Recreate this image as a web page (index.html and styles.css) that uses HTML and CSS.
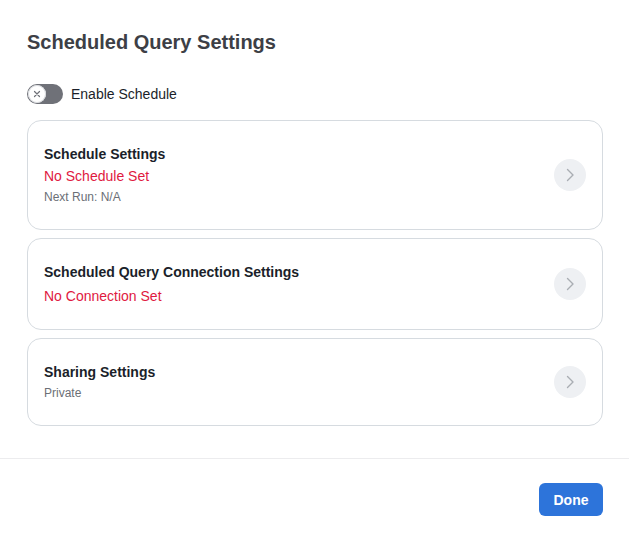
FILE: index.html
```html
<!DOCTYPE html>
<html>
<head>
<meta charset="utf-8">
<link rel="stylesheet" href="styles.css">
</head>
<body>
<div class="modal">
  <div class="body">
    <h1 class="title">Scheduled Query Settings</h1>
    <div class="toggle-row">
      <span class="toggle"><span class="knob"><svg width="10" height="10" viewBox="0 0 10 10"><path d="M2.5 2.5 L7.5 7.5 M7.5 2.5 L2.5 7.5" stroke="#6f7178" stroke-width="1.2" stroke-linecap="round"/></svg></span></span>
      <span class="toggle-label">Enable Schedule</span>
    </div>
    <div class="cards">
      <div class="card">
        <div class="card-text">
          <div class="card-title">Schedule Settings</div>
          <div class="card-status">No Schedule Set</div>
          <div class="card-meta">Next Run: N/A</div>
        </div>
        <span class="chev"><svg width="12" height="14" viewBox="0 0 12 14"><path d="M3.5 1.5 L9 7 L3.5 12.5" fill="none" stroke="#a9adb3" stroke-width="1.4" stroke-linecap="round" stroke-linejoin="round"/></svg></span>
      </div>
      <div class="card">
        <div class="card-text">
          <div class="card-title">Scheduled Query Connection Settings</div>
          <div class="card-status gap">No Connection Set</div>
        </div>
        <span class="chev"><svg width="12" height="14" viewBox="0 0 12 14"><path d="M3.5 1.5 L9 7 L3.5 12.5" fill="none" stroke="#a9adb3" stroke-width="1.4" stroke-linecap="round" stroke-linejoin="round"/></svg></span>
      </div>
      <div class="card">
        <div class="card-text">
          <div class="card-title">Sharing Settings</div>
          <div class="card-meta">Private</div>
        </div>
        <span class="chev"><svg width="12" height="14" viewBox="0 0 12 14"><path d="M3.5 1.5 L9 7 L3.5 12.5" fill="none" stroke="#a9adb3" stroke-width="1.4" stroke-linecap="round" stroke-linejoin="round"/></svg></span>
      </div>
    </div>
  </div>
  <div class="footer">
    <button class="done">Done</button>
  </div>
</div>
</body>
</html>
```
FILE: styles.css
```css
html, body {
  margin: 0;
  padding: 0;
  background: #ffffff;
}
body {
  font-family: "Liberation Sans", Arial, sans-serif;
  color: #1b1f2a;
}
.modal {
  width: 629px;
  height: 536px;
  display: flex;
  flex-direction: column;
}
.body {
  padding: 30px 26px 32px 27px;
  border-bottom: 1px solid #ececee;
}
.title {
  margin: 0;
  font-size: 20px;
  line-height: 24px;
  font-weight: 700;
  color: #3d3f46;
}
.toggle-row {
  margin-top: 30px;
  display: flex;
  align-items: center;
  gap: 8px;
  height: 20px;
}
.toggle {
  width: 36px;
  height: 20px;
  border-radius: 10px;
  background: #6f7178;
  display: flex;
  align-items: center;
  padding-left: 1px;
  box-sizing: border-box;
}
.knob {
  width: 18px;
  height: 18px;
  border-radius: 50%;
  background: #ffffff;
  box-shadow: inset 0 0 0 1px #d7d9dd;
  display: flex;
  align-items: center;
  justify-content: center;
}
.toggle-label {
  font-size: 14px;
  line-height: 18px;
  color: #1b1f2a;
}
.cards {
  margin-top: 16px;
  display: flex;
  flex-direction: column;
  gap: 8px;
}
.card {
  border: 1px solid #d6dbe0;
  border-radius: 14px;
  padding: 23px 16px 23px 16px;
  display: flex;
  align-items: center;
  justify-content: space-between;
}
.card-title {
  font-size: 14px;
  line-height: 20px;
  font-weight: 700;
  color: #1b1f2a;
}
.card-status {
  font-size: 14px;
  line-height: 20px;
  margin-top: 2px;
  color: #e0193f;
}
.card-status.gap {
  margin-top: 4px;
}
.card-meta {
  font-size: 12px;
  line-height: 17px;
  margin-top: 3px;
  color: #6b6f76;
}
.chev {
  width: 32px;
  height: 32px;
  border-radius: 50%;
  background: #eef0f3;
  display: flex;
  align-items: center;
  justify-content: center;
  flex-shrink: 0;
}
.footer {
  display: flex;
  justify-content: flex-end;
  padding: 24px 26px 0 27px;
}
.done {
  width: 64px;
  height: 33px;
  border: none;
  border-radius: 6px;
  background: #2d74da;
  color: #ffffff;
  font-family: "Liberation Sans", Arial, sans-serif;
  font-weight: 700;
  font-size: 14px;
  padding: 0;
}
```
